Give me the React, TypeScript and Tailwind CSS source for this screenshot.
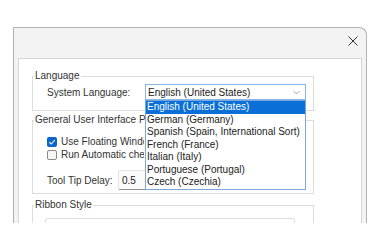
import React from 'react';

const LANGUAGES = [
  'English (United States)',
  'German (Germany)',
  'Spanish (Spain, International Sort)',
  'French (France)',
  'Italian (Italy)',
  'Portuguese (Portugal)',
  'Czech (Czechia)',
];

const Chevron: React.FC<{ className?: string }> = ({ className }) => (
  <svg width="7" height="5" viewBox="0 0 7 5" className={className}>
    <path d="M0.5 1 L3.5 4 L6.5 1" fill="none" stroke="currentColor" strokeWidth="0.9" />
  </svg>
);

const App: React.FC = () => {
  return (
    <div className="w-[380px] h-[250px] bg-white overflow-hidden font-['Liberation_Sans',Arial,sans-serif] text-[10px] text-[#1f1f1f]">
      {/* Dialog window, cropped at the bottom */}
      <div className="ml-[13px] mt-[27px] w-[354px] h-[196px] flex flex-col border-l border-t border-r border-[#b3b3b3] rounded-tr-[8px] bg-[#f3f3f3] overflow-hidden">
        {/* Title bar */}
        <div className="h-[30px] shrink-0 flex justify-end items-start pt-[8px] pr-[8px]">
          <svg width="10" height="10" viewBox="0 0 10 10" className="text-[#333]">
            <path d="M0.5 0.5 L9.5 9.5 M9.5 0.5 L0.5 9.5" stroke="currentColor" strokeWidth="1" />
          </svg>
        </div>

        {/* Body */}
        <div className="flex-1 min-h-0 flex pl-[4px] pr-[4px]">
          <div className="flex-1 border-l border-t border-r border-[#d6d6d6] bg-white pl-[13px] pt-[11px]">
            {/* Language */}
            <fieldset className="w-[282px] border border-[#dcdcdc] pl-[14px] pb-[10px]">
              <legend className="-ml-[13px] px-[1px] leading-[12px] text-[#333]">Language</legend>
              <div className="flex items-center pt-[2px]">
                <span className="w-[98px] text-[#333]">System Language:</span>
                <div className="relative w-[161px] h-[16px]">
                  <div className="h-full flex items-center justify-between border border-[#86b5e8] bg-white pl-[2px] pr-[5px]">
                    <span className="text-[#222]">English (United States)</span>
                    <Chevron className="text-[#9a9a9a]" />
                  </div>
                  {/* Open list */}
                  <div className="absolute left-0 top-full z-10 w-[161px] border border-[#7ba7dc] bg-white">
                    {LANGUAGES.map((lang, i) => (
                      <div
                        key={lang}
                        className={
                          i === 0
                            ? 'h-[12.5px] leading-[12.5px] pl-[1px] bg-[#0a6fd6] text-white'
                            : 'h-[12.5px] leading-[12.5px] pl-[1px] text-[#222]'
                        }
                      >
                        {lang}
                      </div>
                    ))}
                  </div>
                </div>
              </div>
            </fieldset>

            {/* General User Interface Preferences */}
            <fieldset className="mt-[3px] w-[282px] border border-[#dcdcdc] pl-[14px] pb-[3px]">
              <legend className="-ml-[13px] px-[1px] leading-[12px] text-[#333]">
                <span className="inline-block align-top max-w-[110px] overflow-hidden whitespace-nowrap">General User Interface Preferences</span>
              </legend>
              <div className="pt-[9px]">
                <div className="h-[13px] flex items-center gap-[4px]">
                  <span className="w-[10px] h-[10px] rounded-[2px] bg-[#0b66c9] flex items-center justify-center">
                    <svg width="8" height="8" viewBox="0 0 8 8">
                      <path d="M1.3 4.2 L3.2 6 L6.8 2" fill="none" stroke="white" strokeWidth="1.1" />
                    </svg>
                  </span>
                  <span className="max-w-[83px] overflow-hidden text-[#333] whitespace-nowrap">Use Floating Windows</span>
                </div>
                <div className="h-[13px] flex items-center gap-[4px]">
                  <span className="w-[10px] h-[10px] rounded-[2px] border border-[#8c8c8c] bg-[#f6f6f6]" />
                  <span className="max-w-[83px] overflow-hidden text-[#333] whitespace-nowrap">Run Automatic checks</span>
                </div>
                <div className="mt-[9px] flex items-center">
                  <span className="w-[71px] text-[#333]">Tool Tip Delay:</span>
                  <div className="w-[57px] h-[20px] flex items-center pl-[3px] border border-[#e3e3e3] border-b-[#8f8f8f] rounded-[2px] bg-[#fbfbfb] text-[#222]">
                    0.5
                  </div>
                </div>
              </div>
            </fieldset>

            {/* Ribbon Style */}
            <fieldset className="mt-[5px] w-[282px] border border-[#dcdcdc] pl-[12px] pt-[7px]">
              <legend className="-ml-[11px] px-[1px] leading-[12px] text-[#333]">Ribbon Style</legend>
              <div className="w-[250px] h-[18px] flex items-center justify-between border border-[#dedede] rounded-[2px] pl-[3px] pr-[8px] text-[#222]">
                <span>Custom</span>
                <Chevron className="text-[#9a9a9a]" />
              </div>
            </fieldset>
          </div>
        </div>
      </div>
    </div>
  );
};

export default App;
